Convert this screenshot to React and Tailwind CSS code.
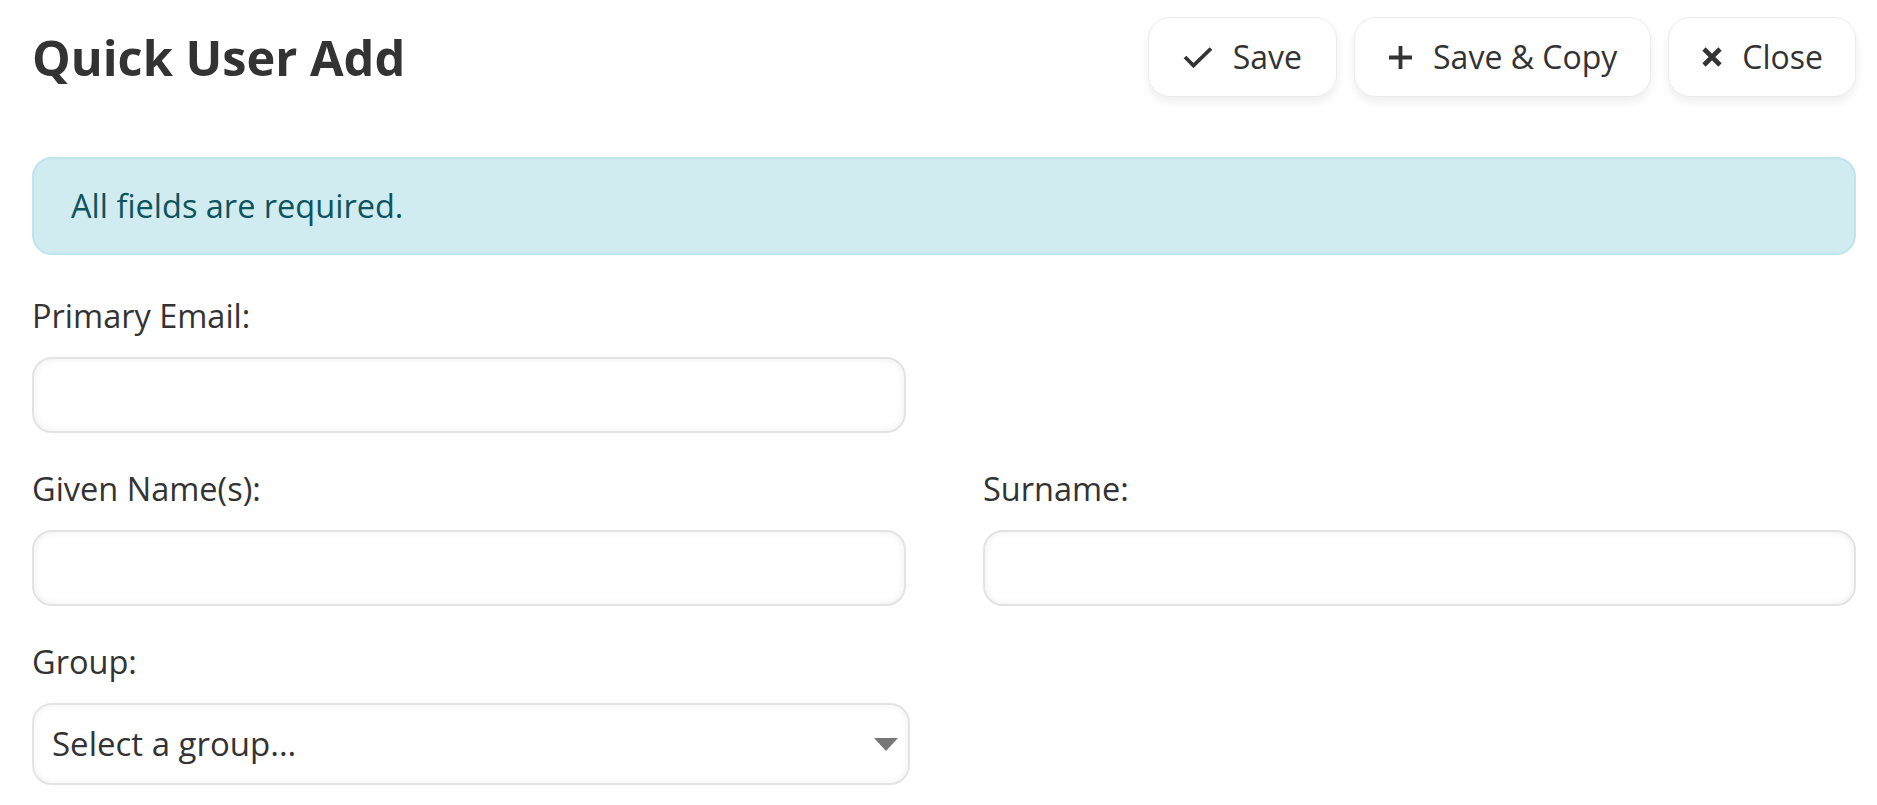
import React from "react";

const CheckIcon = () => (
  <svg width="30" height="22" viewBox="0 0 30 22" fill="none">
    <path d="M2 11 L10.5 19.5 L28 2.5" stroke="#333" strokeWidth="3.8" strokeLinecap="butt" strokeLinejoin="miter" />
  </svg>
);

const PlusIcon = () => (
  <svg width="25" height="25" viewBox="0 0 25 25" fill="none">
    <path d="M12.5 1 V24 M1 12.5 H24" stroke="#333" strokeWidth="3.8" />
  </svg>
);

const XIcon = () => (
  <svg width="20" height="20" viewBox="0 0 20 20" fill="none">
    <path d="M2 2 L18 18 M18 2 L2 18" stroke="#333" strokeWidth="4.6" />
  </svg>
);

function Btn({ icon, children, className = "" }) {
  return (
    <button className={`flex h-[80px] items-center gap-[20px] rounded-[22px] border border-[#ececec] bg-white text-[32px] text-[#333] shadow-[0_5px_10px_rgba(0,0,0,0.07)] ${className}`}>
      {icon}
      <span>{children}</span>
    </button>
  );
}

function Field({ label, className = "" }) {
  return (
    <div className={className}>
      <div className="mb-[17px] text-[32.5px] leading-[48px] text-[#333]">{label}</div>
      <div className="h-[76px] rounded-[20px] border-2 border-[#e3e3e3] bg-white shadow-[inset_0_0_8px_rgba(0,0,0,0.07)]" />
    </div>
  );
}

export default function App() {
  return (
    <div
      className="min-h-[805px] bg-white pl-[32px] pr-[21px] pt-[17px]"
      style={{ fontFamily: '"Open Sans", "Noto Sans", sans-serif' }}
    >
      <div className="flex items-center justify-between">
        <h1 className="text-[48.7px] font-bold leading-none text-[#333]">Quick User Add</h1>
        <div className="flex gap-[17px]">
          <Btn icon={<CheckIcon />} className="px-[34px]">Save</Btn>
          <Btn icon={<PlusIcon />} className="px-[33px]">Save &amp; Copy</Btn>
          <Btn icon={<XIcon />} className="pl-[33px] pr-[32px]">Close</Btn>
        </div>
      </div>

      <div className="mt-[60px] flex h-[98px] items-center rounded-[20px] border-2 border-[#bee5eb] bg-[#d1ecf1] px-[37px] text-[32.5px] text-[#0c5460]">
        All fields are required.
      </div>

      <div className="mt-[37px] grid grid-cols-[874px_873px] gap-x-[77px] gap-y-[32px]">
        <Field label="Primary Email:" />
        <div />
        <Field label="Given Name(s):" />
        <Field label="Surname:" />
        <div className="w-[878px]">
          <div className="mb-[17px] text-[32.5px] leading-[48px] text-[#333]">Group:</div>
          <div className="flex h-[82px] items-center justify-between rounded-[20px] border-2 border-[#e3e3e3] bg-white pl-[18px] pr-[10px] text-[33px] text-[#333] shadow-[inset_0_0_8px_rgba(0,0,0,0.06)]">
            <span>Select a group...</span>
            <svg width="24" height="13" viewBox="0 0 24 13">
              <path d="M0 0 H24 L12 13 Z" fill="#777" />
            </svg>
          </div>
        </div>
      </div>
    </div>
  );
}
